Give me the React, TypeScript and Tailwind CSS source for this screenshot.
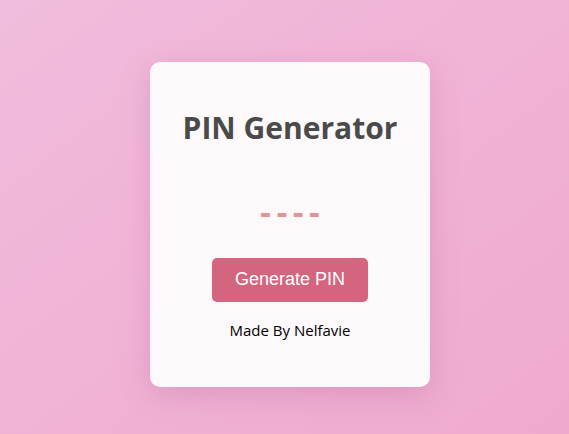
import React, { useState } from "react";

export default function App(): React.ReactElement {
  const [pin, setPin] = useState("----");

  const generate = () => {
    setPin(String(Math.floor(1000 + Math.random() * 9000)));
  };

  return (
    <main className="flex min-h-[434px] w-full items-center justify-center bg-gradient-to-br from-[#f1bcdd] to-[#efa9cf] pl-[11px] pt-[14px]">
      <section className="flex h-[325px] w-[280px] flex-col items-center rounded-[10px] bg-[#fdf9fb] shadow-[0_8px_28px_rgba(190,110,150,0.35)]">
        <h1 className="mt-[46px] text-[30px] font-bold leading-[40px] text-[#4a4a4a] [font-family:'Open_Sans','Noto_Sans',sans-serif]">
          PIN Generator
        </h1>

        <div className="mt-[44px] pl-[5px] text-[34px] font-bold leading-[40px] tracking-[5px] text-[#e09494] [font-family:'Liberation_Sans',Arial,sans-serif]">
          {pin}
        </div>

        <button
          onClick={generate}
          className="mt-[26px] h-[44px] w-[156px] rounded-[5px] bg-[#d4657f] text-[18px] text-white [font-family:'Liberation_Sans',Arial,sans-serif]"
        >
          Generate PIN
        </button>

        <p className="mt-[18px] text-[15px] leading-5 text-black [font-family:'Open_Sans','Noto_Sans',sans-serif]">
          Made By Nelfavie
        </p>
      </section>
    </main>
  );
}
